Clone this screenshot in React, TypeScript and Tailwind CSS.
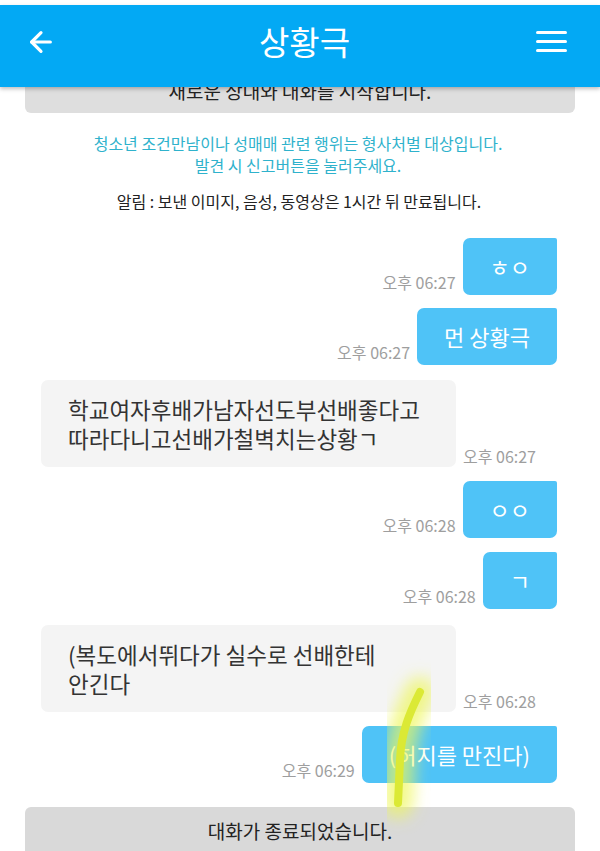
import { ArrowLeft } from 'lucide-react'

const FONT = { fontFamily: '"Noto Sans CJK KR", "Noto Sans", sans-serif' }

type Msg =
  | { side: 'me'; text: string; time: string; gap: string }
  | { side: 'them'; lines: string[]; time: string; gap: string }

const MESSAGES: Msg[] = [
  { side: 'me', text: 'ㅎㅇ', time: '오후 06:27', gap: 'mt-[26px]' },
  { side: 'me', text: '먼 상황극', time: '오후 06:27', gap: 'mt-[13px]' },
  { side: 'them', lines: ['학교여자후배가남자선도부선배좋다고', '따라다니고선배가철벽치는상황ㄱ'], time: '오후 06:27', gap: 'mt-[15px]' },
  { side: 'me', text: 'ㅇㅇ', time: '오후 06:28', gap: 'mt-[14px]' },
  { side: 'me', text: 'ㄱ', time: '오후 06:28', gap: 'mt-[14px]' },
  { side: 'them', lines: ['(복도에서뛰다가 실수로 선배한테', '안긴다'], time: '오후 06:28', gap: 'mt-[16px]' },
  { side: 'me', text: '(허지를 만진다)', time: '오후 06:29', gap: 'mt-[14px]' },
]

function Time({ t, className = '' }: { t: string; className?: string }) {
  return <span className={`text-[16px] leading-[19px] text-[#9e9e9e] whitespace-nowrap ${className}`}>{t}</span>
}

export default function App() {
  return (
    <div className="relative w-[600px] h-[851px] overflow-hidden bg-white" style={FONT}>
      <div className="h-[5px] bg-white" />
      <header className="relative z-10 h-[82px] bg-[#03a9f4] shadow-[0_2px_4px_rgba(0,0,0,0.25)] flex items-center justify-between pb-[9px] pl-[25px] pr-[33px] text-white">
        <ArrowLeft size={32} strokeWidth={2.4} />
        <h1 className="text-[33px] leading-none ml-[16px]">상황극</h1>
        <div className="flex flex-col gap-[6px]">
          <span className="block w-[31px] h-[3px] bg-white rounded-full" />
          <span className="block w-[31px] h-[3px] bg-white rounded-full" />
          <span className="block w-[31px] h-[3px] bg-white rounded-full" />
        </div>
      </header>

      <div className="mx-[25px] -mt-[20px] h-[46px] rounded-[6px] bg-[#dedede] flex items-center justify-center">
        <span className="text-[19px] text-[#222] mt-[2px]">새로운 상대와 대화를 시작합니다.</span>
      </div>

      <div className="mt-[19px] text-center text-[16px] leading-[22px] text-[#2fb2cc] pr-[4px]">
        <p>청소년 조건만남이나 성매매 관련 행위는 형사처벌 대상입니다.</p>
        <p>발견 시 신고버튼을 눌러주세요.</p>
      </div>
      <p className="mt-[14px] text-center text-[16px] leading-[22px] text-[#222] pr-[2px]">
        알림 : 보낸 이미지, 음성, 동영상은 1시간 뒤 만료됩니다.
      </p>

      {MESSAGES.map((m, i) =>
        m.side === 'me' ? (
          <div key={i} className={`flex justify-end items-end gap-[7px] pr-[43px] ${m.gap}`}>
            <Time t={m.time} className="mb-[3px]" />
            <div className="h-[57px] px-[27px] flex items-center rounded-[7px] rounded-tr-[2px] bg-[#4fc3f7] text-white text-[22px] whitespace-nowrap">
              {m.text}
            </div>
          </div>
        ) : (
          <div key={i} className={`flex items-end gap-[7px] pl-[41px] ${m.gap}`}>
            <div className="w-[415px] h-[87px] px-[27px] flex flex-col justify-center rounded-[7px] bg-[#f4f4f4] text-[#333] text-[22.5px] leading-[29px]">
              {m.lines.map((l, j) => (
                <span key={j} className="whitespace-nowrap">{l}</span>
              ))}
            </div>
            <Time t={m.time} className="mb-[1px]" />
          </div>
        )
      )}

      <div className="mt-[24px] mx-[25px] h-[60px] rounded-t-[6px] bg-[#d9d9d9] flex justify-center pt-[10px]">
        <span className="text-[19px] text-[#222]">대화가 종료되었습니다.</span>
      </div>

      <svg className="absolute left-0 top-0 pointer-events-none" width="600" height="851">
        <defs>
          <filter id="glow" x="-50%" y="-50%" width="200%" height="200%">
            <feGaussianBlur stdDeviation="8" />
          </filter>
        </defs>
        <path d="M420 692 C410 712 401 732 400 760 L398 803" stroke="#eef75a" strokeOpacity="0.7" strokeWidth="30" fill="none" strokeLinecap="round" filter="url(#glow)" />
        <path d="M420 692 C410 712 401 732 400 760 L398 803" stroke="#dbe935" strokeWidth="8" fill="none" strokeLinecap="round" />
      </svg>
    </div>
  )
}
